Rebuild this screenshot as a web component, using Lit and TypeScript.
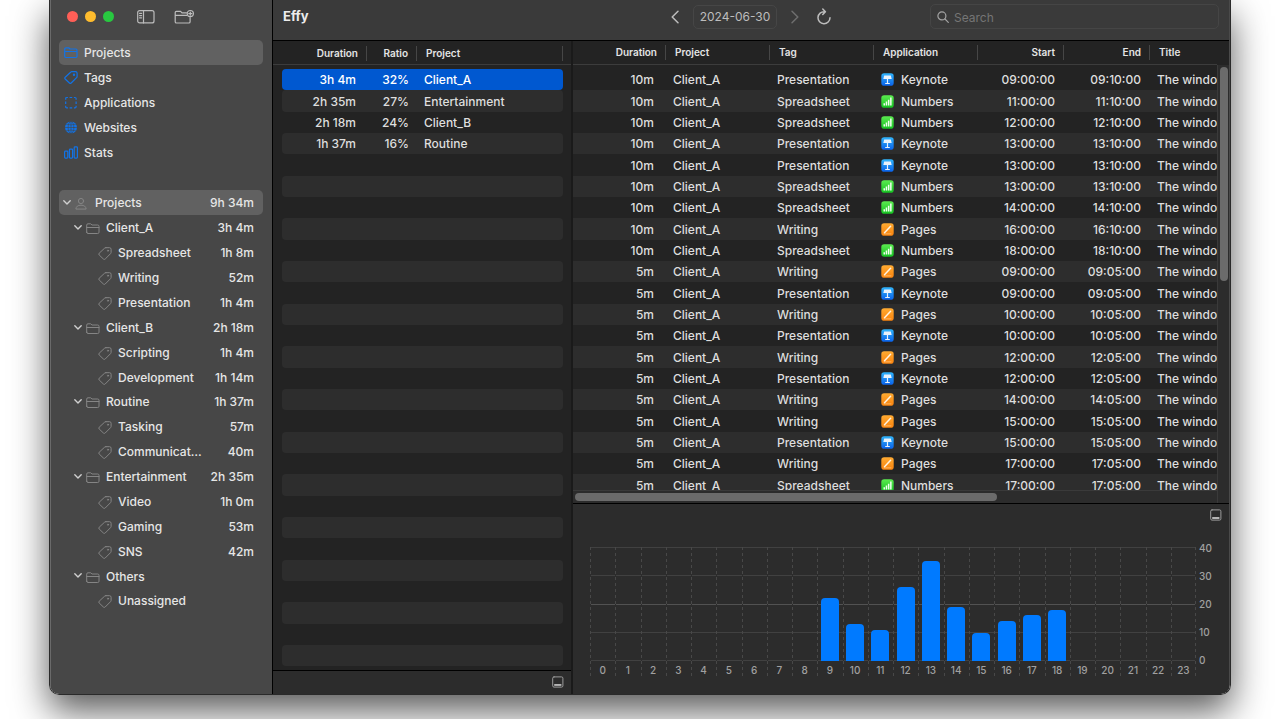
import { LitElement, html, svg, css, nothing } from "lit";
import { customElement, state } from "lit/decorators.js";
import { classMap } from "lit/directives/class-map.js";

type AppName = "Keynote" | "Numbers" | "Pages";

interface Entry {
  duration: string;
  tag: string;
  app: AppName;
  start: string;
  end: string;
}

const APP_BY_TAG: Record<string, AppName> = {
  Presentation: "Keynote",
  Spreadsheet: "Numbers",
  Writing: "Pages",
};

const entry = (minutes: number, hour: string, tag: string): Entry => ({
  duration: `${minutes}m`,
  tag,
  app: APP_BY_TAG[tag],
  start: `${hour}:00:00`,
  end: `${hour}:${String(minutes).padStart(2, "0")}:00`,
});

const ENTRIES: Entry[] = [
  entry(10, "09", "Presentation"),
  entry(10, "11", "Spreadsheet"),
  entry(10, "12", "Spreadsheet"),
  entry(10, "13", "Presentation"),
  entry(10, "13", "Presentation"),
  entry(10, "13", "Spreadsheet"),
  entry(10, "14", "Spreadsheet"),
  entry(10, "16", "Writing"),
  entry(10, "18", "Spreadsheet"),
  entry(5, "09", "Writing"),
  entry(5, "09", "Presentation"),
  entry(5, "10", "Writing"),
  entry(5, "10", "Presentation"),
  entry(5, "12", "Writing"),
  entry(5, "12", "Presentation"),
  entry(5, "14", "Writing"),
  entry(5, "15", "Writing"),
  entry(5, "15", "Presentation"),
  entry(5, "17", "Writing"),
  entry(5, "17", "Spreadsheet"),
];

const SUMMARY = [
  ["3h 4m", "32%", "Client_A"],
  ["2h 35m", "27%", "Entertainment"],
  ["2h 18m", "24%", "Client_B"],
  ["1h 37m", "16%", "Routine"],
];
const SUMMARY_ROWS = 28;

const TREE: { level: number; name: string; time: string }[] = [
  { level: 0, name: "Projects", time: "9h 34m" },
  { level: 1, name: "Client_A", time: "3h 4m" },
  { level: 2, name: "Spreadsheet", time: "1h 8m" },
  { level: 2, name: "Writing", time: "52m" },
  { level: 2, name: "Presentation", time: "1h 4m" },
  { level: 1, name: "Client_B", time: "2h 18m" },
  { level: 2, name: "Scripting", time: "1h 4m" },
  { level: 2, name: "Development", time: "1h 14m" },
  { level: 1, name: "Routine", time: "1h 37m" },
  { level: 2, name: "Tasking", time: "57m" },
  { level: 2, name: "Communication", time: "40m" },
  { level: 1, name: "Entertainment", time: "2h 35m" },
  { level: 2, name: "Video", time: "1h 0m" },
  { level: 2, name: "Gaming", time: "53m" },
  { level: 2, name: "SNS", time: "42m" },
  { level: 1, name: "Others", time: "" },
  { level: 2, name: "Unassigned", time: "" },
];

const HOURLY = [0, 0, 0, 0, 0, 0, 0, 0, 0, 22, 13, 11, 26, 35, 19, 10, 14, 16, 18, 0, 0, 0, 0, 0];
const CHART_MAX = 40;

const folderShape = svg`<path d="M.7 10.2V3.100Q.7 1.800 2 1.800h2.700l1.300 1.200h5.700q1.300 0 1.300 1.300v5.900q0 1.300-1.300 1.300H2Q.7 11.500.7 10.200zM.7 5.500h12.300"/>`;
const tagShape = svg`<path d="M7.900.7h3.600q1.600 0 1.600 1.600v3.100q0 .7-.5 1.200L7.200 12q-.9.900-1.800 0L1.200 8q-.9-.9 0-1.800L6.600 1.200q.5-.5 1.300-.5z"/><circle cx="10" cy="3.700" r=".6"/>`;

const icons = {
  folder: html`<svg class="glyph" viewBox="0 0 14 13" aria-hidden="true">${folderShape}</svg>`,
  tag: html`<svg class="glyph" viewBox="0 0 14 13" aria-hidden="true">${tagShape}</svg>`,
  dashed: html`<svg class="glyph" viewBox="0 0 14 13" aria-hidden="true"><path d="M1.700 3.700V2.600q0-1.100 1.100-1.100h1.100M5.600 1.500h2.600M9.900 1.500H11q1.100 0 1.100 1.100v1.100M12.100 5.400V8M12.100 9.700v1.100q0 1.100-1.100 1.100H9.900M8.200 11.900H5.600M3.900 11.900H2.800q-1.100 0-1.100-1.100V9.700M1.700 8V5.400" stroke-linecap="butt"/></svg>`,
  globe: html`<svg class="glyph" viewBox="0 0 14 13" aria-hidden="true"><circle cx="7" cy="6.500" r="6" class="solid"/><g class="cut"><ellipse cx="7" cy="6.500" rx="2.900" ry="6"/><path d="M7 .5v12M1 6.500h12M2.200 3.200q4.800 1.600 9.600 0M2.200 9.800q4.800-1.600 9.600 0"/></g></svg>`,
  stats: html`<svg class="glyph" viewBox="0 0 14 13" aria-hidden="true"><rect x=".6" y="5.200" width="3.200" height="6.900" rx=".8"/><rect x="5.400" y="3.200" width="3.200" height="8.900" rx=".8"/><rect x="10.200" y=".9" width="3.200" height="11.200" rx=".8"/></svg>`,
  person: html`<svg class="glyph" viewBox="0 0 14 13" aria-hidden="true"><circle cx="6" cy="4" r="2.600"/><path d="M.9 11.700Q1.200 8.200 6 8.200t5.100 3.500z"/></svg>`,
  chevronDown: html`<svg class="chevron" viewBox="0 0 10 10" aria-hidden="true"><path d="M1.800 2.800L5 6l3.200-3.200"/></svg>`,
  panel: html`<svg class="panel-glyph" viewBox="0 0 12 12" aria-hidden="true"><rect x=".7" y=".9" width="10.200" height="10.200" rx="1.300"/><path class="fill" d="M2.200 8h7.200v1.900H2.200z"/></svg>`,
};

const appIcons: Record<AppName, unknown> = {
  Keynote: html`<svg class="app-icon" viewBox="0 0 13 13" aria-hidden="true"><defs><linearGradient id="keynote-fill" x2="0" y2="1"><stop stop-color="#2fb4fb"/><stop offset="1" stop-color="#0a62ea"/></linearGradient></defs><rect x=".3" y=".3" width="12.400" height="12.400" rx="2.800" fill="url(#keynote-fill)"/><path d="M3.200 2.500h6.600l.9 3.500H2.300z" fill="#e8f2fb"/><path d="M5.900 6h1.200v4.200H5.900zM4.200 10h4.600v.9H4.200z" fill="#e8f2fb"/></svg>`,
  Numbers: html`<svg class="app-icon" viewBox="0 0 13 13" aria-hidden="true"><defs><linearGradient id="numbers-fill" x2="0" y2="1"><stop stop-color="#5bea4f"/><stop offset="1" stop-color="#16c322"/></linearGradient></defs><rect x=".3" y=".3" width="12.400" height="12.400" rx="2.800" fill="url(#numbers-fill)"/><path d="M2.500 8.300h1.500v2.300H2.500zM4.700 6.600h1.500v4H4.700zM6.900 4.700h1.500v5.900H6.900zM9.100 2.600h1.500v8H9.100z" fill="#f2fff0"/></svg>`,
  Pages: html`<svg class="app-icon" viewBox="0 0 13 13" aria-hidden="true"><defs><linearGradient id="pages-fill" x2="0" y2="1"><stop stop-color="#ffab32"/><stop offset="1" stop-color="#f9820c"/></linearGradient></defs><rect x=".3" y=".3" width="12.400" height="12.400" rx="2.800" fill="url(#pages-fill)"/><path d="M3.500 9.700L9.600 3.300" stroke="#fff4e2" stroke-width="1.500" stroke-linecap="round"/><path d="M3 10.900h7" stroke="#ffd9a0" stroke-width=".6"/></svg>`,
};

const reset = css`
  :host,
  * {
    box-sizing: border-box;
  }
  button {
    font: inherit;
    color: inherit;
    background: none;
    border: 0;
    margin: 0;
    padding: 0;
    text-align: left;
  }
  svg {
    display: block;
    flex: none;
    fill: none;
    stroke: currentColor;
    stroke-linejoin: round;
    stroke-linecap: round;
  }
  .panel-glyph {
    width: 12px;
    height: 12px;
    color: #9c9c9c;
  }
  .panel-glyph .fill {
    fill: #b4b4b4;
    stroke: none;
  }
`;

const tableStyles = css`
  table {
    table-layout: fixed;
    border-collapse: separate;
    border-spacing: 0;
  }
  th {
    height: 24px;
    padding: 0 9px;
    font-size: 10px;
    font-weight: 600;
    color: #e4e4e4;
    text-align: left;
    background: linear-gradient(#464646, #464646) right center / 1px 15px no-repeat;
  }
  tbody::before {
    content: "";
    display: block;
    height: 4px;
  }
  td {
    height: 21px;
    padding: 0 7px;
    white-space: nowrap;
  }
  tr:nth-child(3n + 2) td {
    height: 22px;
  }
  th.num,
  td.num {
    text-align: right;
  }
`;

@customElement("effy-sidebar")
export class EffySidebar extends LitElement {
  @state() private section = "Projects";
  @state() private node = "Projects";

  static styles = [
    reset,
    css`
      :host {
        display: block;
        background: #474747;
        border-right: 1px solid #000;
        border-left: 1px solid #6a6a6a;
        padding: 0 9px 0 8px;
      }
      .titlebar {
        height: 40px;
        padding: 0 8px 7px;
        display: flex;
        align-items: center;
      }
      .lights {
        display: flex;
        gap: 7px;
        margin-right: 22px;
      }
      .light {
        width: 11px;
        height: 11px;
        border-radius: 50%;
      }
      .close {
        background: #ff5f57;
      }
      .minimise {
        background: #febc2e;
      }
      .zoom {
        background: #28c840;
      }
      .tool {
        color: #bcbcbc;
        margin-right: 18px;
      }
      .tool svg {
        width: 20px;
        height: 16px;
        stroke-width: 1.2;
      }
      ul {
        list-style: none;
        margin: 0;
        padding: 0;
      }
      .tree {
        margin-top: 25px;
      }
      .row {
        width: 100%;
        height: 25px;
        display: flex;
        align-items: center;
        border-radius: 5px;
        color: #e6e6e6;
      }
      .tree li:nth-child(8n) .row {
        height: 24px;
      }
      .row.selected {
        background: #616161;
      }
      .glyph {
        width: 14px;
        height: 13px;
        margin-right: 6px;
      }
      .nav .row {
        padding-left: 5px;
      }
      .nav .glyph {
        color: #1273e6;
        stroke-width: 1.2;
      }
      .solid {
        fill: #1273e6;
        stroke: none;
      }
      .cut {
        stroke: #474747;
        stroke-width: 0.6;
      }
      .tree .glyph {
        color: #858585;
        stroke-width: 1;
        margin-top: 2px;
      }
      .chevron {
        width: 10px;
        height: 10px;
        margin-right: 3px;
        color: #d0d0d0;
        stroke-width: 1.4;
      }
      .level-0 {
        padding-left: 3px;
      }
      .level-1 {
        padding-left: 14px;
      }
      .level-2 {
        padding-left: 39px;
      }
      .name {
        flex: 1;
        min-width: 0;
        overflow: hidden;
        text-overflow: ellipsis;
        white-space: nowrap;
      }
      .time {
        width: 61px;
        padding-right: 9px;
        text-align: right;
        white-space: nowrap;
      }
    `,
  ];

  private renderSection(label: string, icon: unknown) {
    const classes = { row: true, selected: this.section === label };
    return html`<li>
      <button class=${classMap(classes)} @click=${() => (this.section = label)}>${icon}<span>${label}</span></button>
    </li>`;
  }

  render() {
    return html`
      <div class="titlebar">
        <div class="lights">
          <button class="light close" aria-label="Close"></button>
          <button class="light minimise" aria-label="Minimise"></button>
          <button class="light zoom" aria-label="Zoom"></button>
        </div>
        <button class="tool" aria-label="Toggle sidebar">
          <svg viewBox="0 0 20 16"><rect x="1.700" y="1.600" width="16.300" height="12.300" rx="2" /><path d="M7.500 1.600v12.300M3.600 4.400h2M3.600 6.600h2M3.600 8.800h2" /></svg>
        </button>
        <button class="tool" aria-label="New project">
          <svg viewBox="0 0 20 16"><path d="M12.500 3.800H8L6.600 2.300H2.400Q1.200 2.300 1.200 3.500v9.200q0 1.300 1.300 1.300h12.300q1.300 0 1.300-1.300V8.600M1.200 6.400h11.300" /><circle cx="16.300" cy="4.600" r="3.100" /><path d="M16.300 3v3.200M14.700 4.600h3.200" /></svg>
        </button>
      </div>
      <nav>
        <ul class="nav">
          ${this.renderSection("Projects", icons.folder)}
          ${this.renderSection("Tags", icons.tag)}
          ${this.renderSection("Applications", icons.dashed)}
          ${this.renderSection("Websites", icons.globe)}
          ${this.renderSection("Stats", icons.stats)}
        </ul>
      </nav>
      <ul class="tree">
        ${TREE.map(
          (item) => html`<li>
            <button
              class=${classMap({ row: true, [`level-${item.level}`]: true, selected: this.node === item.name })}
              @click=${() => (this.node = item.name)}
            >
              ${item.level < 2 ? icons.chevronDown : nothing}
              ${[icons.person, icons.folder, icons.tag][item.level]}
              <span class="name">${item.name}</span><span class="time">${item.time}</span>
            </button>
          </li>`
        )}
      </ul>
    `;
  }
}

@customElement("effy-toolbar")
export class EffyToolbar extends LitElement {
  static styles = [
    reset,
    css`
      :host {
        height: 41px;
        padding: 0 10px 7px;
        display: flex;
        align-items: center;
        background: #3a3a3a;
        border-bottom: 1px solid #000;
      }
      h1 {
        margin: 0;
        font-size: 13px;
        font-weight: 700;
        color: #ececec;
      }
      .dates {
        display: flex;
        align-items: center;
        margin-left: auto;
        margin-right: 98px;
        color: #bdbdbd;
      }
      .dates svg {
        width: 10px;
        height: 16px;
        stroke-width: 1.5;
      }
      .dates .refresh svg {
        width: 16px;
        height: 18px;
        margin-left: 16px;
      }
      .dates .disabled {
        color: #6e6e6e;
      }
      .date {
        width: 84px;
        height: 24px;
        margin: 0 13px;
        border: 1px solid #464646;
        border-radius: 5px;
        font-weight: 400;
        text-align: center;
      }
      .search {
        width: 289px;
        height: 25px;
        padding: 0 6px;
        display: flex;
        align-items: center;
        gap: 5px;
        border: 1px solid #454545;
        border-radius: 5px;
        color: #a4a4a4;
      }
      .search svg {
        width: 12px;
        height: 12px;
        stroke-width: 1.2;
      }
      input {
        flex: 1;
        min-width: 0;
        padding: 2px 0 0;
        border: 0;
        outline: 0;
        background: none;
        font: inherit;
        font-weight: 400;
        color: #e0e0e0;
      }
      input::placeholder {
        color: #757575;
      }
    `,
  ];

  render() {
    return html`
      <h1>Effy</h1>
      <div class="dates">
        <button aria-label="Previous day"><svg viewBox="0 0 10 16"><path d="M8 2.200L2.200 8 8 13.800" /></svg></button>
        <button class="date">2024-06-30</button>
        <button class="disabled" aria-label="Next day"><svg viewBox="0 0 10 16"><path d="M2 2.200L7.800 8 2 13.800" /></svg></button>
        <button class="refresh" aria-label="Refresh"><svg viewBox="0 0 16 18"><path d="M8.600 3.700A6 6 0 1 0 14 9.700M6.800 1l2.600 2.700L6.800 6.400" /></svg></button>
      </div>
      <label class="search">
        <svg viewBox="0 0 12 12" aria-hidden="true"><circle cx="4.900" cy="4.900" r="4" /><path d="M8 8l3.300 3.300" /></svg>
        <input type="search" placeholder="Search" aria-label="Search" />
      </label>
    `;
  }
}

@customElement("effy-summary")
export class EffySummary extends LitElement {
  @state() private selected = 0;

  static styles = [
    reset,
    tableStyles,
    css`
      :host {
        display: flex;
        flex-direction: column;
        min-height: 0;
        background: #232323;
        border-right: 2px solid #1a1a1a;
      }
      .body {
        flex: 1;
        min-height: 0;
        overflow: hidden;
        padding: 0 8px 0 9px;
        background: linear-gradient(#3c3c3c, #3c3c3c) 0 23px / 100% 1px no-repeat;
      }
      table {
        width: 100%;
      }
      .c-duration {
        width: 85px;
      }
      .c-ratio {
        width: 50px;
      }
      td.num {
        padding-right: 11px;
      }
      td.ratio {
        padding-right: 8px;
      }
      tr:nth-child(even) td {
        background: #2d2d2d;
      }
      tbody td:first-child {
        border-radius: 4px 0 0 4px;
      }
      tbody td:last-child {
        border-radius: 0 4px 4px 0;
      }
      tbody tr.selected td {
        background: #0058d0;
        color: #fff;
      }
      footer {
        height: 24px;
        flex: none;
        padding: 0 7px 2px;
        display: flex;
        align-items: center;
        justify-content: flex-end;
        background: #2c2c2c;
        border-top: 1px solid #000;
      }
    `,
  ];

  render() {
    return html`
      <div class="body">
        <table>
          <colgroup>
            <col class="c-duration" />
            <col class="c-ratio" />
            <col />
          </colgroup>
          <thead>
            <tr>
              <th class="num">Duration</th>
              <th class="num">Ratio</th>
              <th>Project</th>
            </tr>
          </thead>
          <tbody>
            ${Array.from({ length: SUMMARY_ROWS }, (_, i) => {
              const [duration, ratio, project] = SUMMARY[i] ?? ["", "", ""];
              return html`<tr class=${classMap({ selected: this.selected === i })} @click=${() => (this.selected = SUMMARY[i] ? i : this.selected)}>
                <td class="num">${duration}</td>
                <td class="num ratio">${ratio}</td>
                <td>${project}</td>
              </tr>`;
            })}
          </tbody>
        </table>
      </div>
      <footer><button aria-label="Toggle panel">${icons.panel}</button></footer>
    `;
  }
}

@customElement("effy-entries")
export class EffyEntries extends LitElement {
  static styles = [
    reset,
    tableStyles,
    css`
      :host {
        flex: 1;
        min-height: 0;
        display: grid;
        grid-template: 24px minmax(0, 1fr) 13px / minmax(0, 1fr) 12px;
        background: #232323;
      }
      .viewport {
        grid-area: 1 / 1 / 3 / 2;
        overflow: hidden;
      }
      table {
        width: 975px;
      }
      th {
        border-bottom: 1px solid #3c3c3c;
      }
      .c-duration {
        width: 93px;
      }
      .c-text {
        width: 104px;
      }
      .c-time {
        width: 86px;
      }
      td.num {
        padding-right: 12px;
      }
      td.time {
        padding-right: 9px;
      }
      tr:nth-child(even) td {
        background: #2d2d2d;
      }
      .app {
        display: flex;
        align-items: center;
        gap: 7px;
      }
      .app-icon {
        width: 13px;
        height: 13px;
        stroke: none;
      }
      .v-track {
        grid-area: 2 / 2 / 4 / 3;
        padding: 2px 1px 0 2px;
        background: #2c2c2c;
        border-left: 1px solid #3a3a3a;
      }
      .h-track {
        grid-area: 3 / 1 / 4 / 2;
        padding: 2px 2px 0;
        background: #2c2c2c;
        border-top: 1px solid #3a3a3a;
      }
      .v-thumb {
        width: 8px;
        height: 49%;
        border-radius: 4px;
        background: #6b6b6b;
      }
      .h-thumb {
        width: 66%;
        height: 8px;
        border-radius: 4px;
        background: #6b6b6b;
      }
    `,
  ];

  render() {
    return html`
      <div class="viewport">
        <table>
          <colgroup>
            <col class="c-duration" />
            <col class="c-text" />
            <col class="c-text" />
            <col class="c-text" />
            <col class="c-time" />
            <col class="c-time" />
            <col />
          </colgroup>
          <thead>
            <tr>
              <th class="num">Duration</th>
              <th>Project</th>
              <th>Tag</th>
              <th>Application</th>
              <th class="num">Start</th>
              <th class="num">End</th>
              <th>Title</th>
            </tr>
          </thead>
          <tbody>
            ${ENTRIES.map(
              (e) => html`<tr>
                <td class="num">${e.duration}</td>
                <td>Client_A</td>
                <td>${e.tag}</td>
                <td><div class="app">${appIcons[e.app]}<span>${e.app}</span></div></td>
                <td class="num time">${e.start}</td>
                <td class="num time">${e.end}</td>
                <td>The window</td>
              </tr>`
            )}
          </tbody>
        </table>
      </div>
      <div class="v-track"><div class="v-thumb"></div></div>
      <div class="h-track"><div class="h-thumb"></div></div>
    `;
  }
}

@customElement("effy-chart")
export class EffyChart extends LitElement {
  static styles = [
    reset,
    css`
      :host {
        flex: none;
        display: block;
        height: 191px;
        padding: 5px 7px 0 17px;
        background: #2c2c2c;
        border-top: 1px solid #000;
        font-size: 10px;
        line-height: 12px;
        color: #a0a0a0;
      }
      .bar-top {
        display: flex;
        justify-content: flex-end;
        margin-bottom: 26px;
      }
      .chart {
        display: grid;
        grid-template: 114px 17px / minmax(0, 1fr) 22px;
        column-gap: 3px;
        padding-right: 1px;
      }
      .lines,
      .hours {
        grid-area: 1 / 1;
      }
      .lines {
        display: flex;
        flex-direction: column;
        justify-content: space-between;
      }
      .line {
        height: 1px;
        background: #414141;
      }
      .line.mid {
        background: #525252;
      }
      .hours {
        grid-row: 1 / 3;
        display: grid;
        grid-template-columns: repeat(24, minmax(0, 1fr));
        background: repeating-linear-gradient(#484848 0 3px, #2c2c2c 3px 6px) right top / 1px 100% no-repeat;
      }
      .hour {
        display: grid;
        grid-template-rows: 114px 17px;
        justify-items: center;
        align-items: end;
        background: repeating-linear-gradient(#484848 0 3px, #2c2c2c 3px 6px) left top / 1px 100% no-repeat;
      }
      .hour .bar {
        width: 18px;
        border-radius: 4px 4px 0 0;
        background: #007aff;
      }
      .hour span {
        align-self: center;
      }
      .scale {
        grid-area: 1 / 2;
        display: flex;
        flex-direction: column;
        justify-content: space-between;
        margin: -5px 0;
      }
    `,
  ];

  render() {
    const ticks = [40, 30, 20, 10, 0];
    return html`
      <div class="bar-top"><button aria-label="Toggle chart">${icons.panel}</button></div>
      <div class="chart">
        <div class="lines">${ticks.map((t) => html`<div class=${classMap({ line: true, mid: t === 20 })}></div>`)}</div>
        <div class="hours">
          ${HOURLY.map(
            (value, hour) => html`<div class="hour">
              <div class="bar" style="height:${(value / CHART_MAX) * 100}%"></div>
              <span>${hour}</span>
            </div>`
          )}
        </div>
        <div class="scale">${ticks.map((t) => html`<span>${t}</span>`)}</div>
      </div>
    `;
  }
}

@customElement("app-root")
export class AppRoot extends LitElement {
  static styles = css`
    :host {
      display: block;
      height: 100vh;
      padding: 0 49px 24px;
      box-sizing: border-box;
      overflow: hidden;
      background: #fff;
      font: 500 12px/15px Inter, "Liberation Sans", sans-serif;
      color: #dedede;
    }
    .window {
      box-sizing: border-box;
      height: 100%;
      display: grid;
      grid-template-columns: 223px minmax(0, 1fr);
      border: 1px solid #2a2a2a;
      border-top: 0;
      border-radius: 0 0 10px 10px;
      overflow: hidden;
      box-shadow: 0 16px 36px rgba(0, 0, 0, 0.65);
    }
    .main {
      min-height: 0;
      display: grid;
      grid-template: auto minmax(0, 1fr) / 300px minmax(0, 1fr);
      border-right: 1px solid #4a4a4a;
    }
    .top {
      grid-column: 1 / 3;
    }
    .detail {
      min-height: 0;
      display: flex;
      flex-direction: column;
    }
  `;

  render() {
    return html`
      <div class="window">
        <effy-sidebar></effy-sidebar>
        <div class="main">
          <effy-toolbar class="top"></effy-toolbar>
          <effy-summary></effy-summary>
          <div class="detail">
            <effy-entries></effy-entries>
            <effy-chart></effy-chart>
          </div>
        </div>
      </div>
    `;
  }
}
